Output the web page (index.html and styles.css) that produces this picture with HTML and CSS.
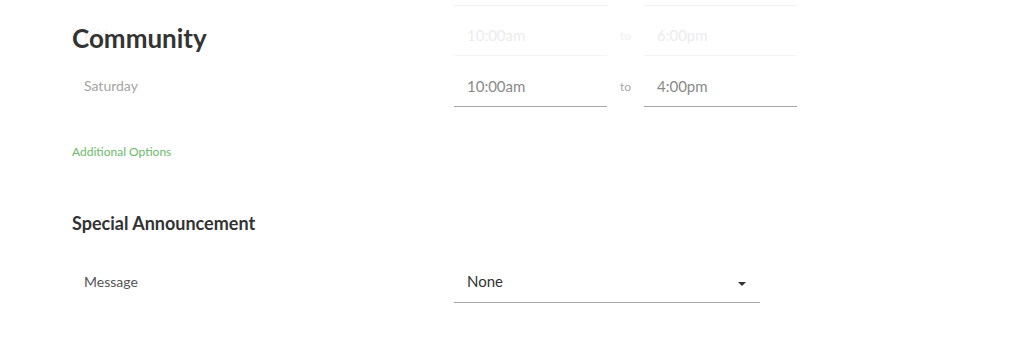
FILE: index.html
```html
<!DOCTYPE html>
<html lang="en">
<head>
<meta charset="utf-8">
<title>Community settings</title>
<link rel="stylesheet" href="styles.css">
</head>
<body>
<div class="page">
  <div class="hours">
    <div class="row faded">
      <span class="label">Friday</span>
      <div class="range">
        <div class="field">10:00am</div>
        <span class="to">to</span>
        <div class="field">6:00pm</div>
      </div>
    </div>
    <div class="row">
      <span class="label">Saturday</span>
      <div class="range">
        <div class="field">10:00am</div>
        <span class="to">to</span>
        <div class="field">4:00pm</div>
      </div>
    </div>
  </div>

  <h1 class="sticky-title">Community</h1>

  <a class="options" href="#">Additional Options</a>

  <h2 class="section-title">Special Announcement</h2>

  <div class="row message-row">
    <span class="label dark">Message</span>
    <div class="select">
      <span class="select-value">None</span>
      <svg class="caret" width="8" height="4" viewBox="0 0 8 4"><path d="M0 0h8L4 4z" fill="#333"/></svg>
    </div>
  </div>
</div>
</body>
</html>
```

FILE: styles.css
```css
* { box-sizing: border-box; }
html, body { margin: 0; padding: 0; background: #fff; }
body {
  font-family: "Lato", "Liberation Sans", sans-serif;
  color: #333;
  width: 1035px;
  height: 359px;
  overflow: hidden;
}
.page {
  position: relative;
  padding: 5px 0 0 72px;
}
.row {
  display: flex;
  align-items: flex-start;
}
.label {
  width: 382px;
  padding: 20px 0 0 12px;
  font-size: 14px;
  line-height: 20px;
  color: #a4a4a4;
}
.label.dark { color: #555; padding-top: 20px; }
.range {
  display: flex;
  align-items: flex-start;
}
.field {
  width: 153px;
  height: 51px;
  padding: 20px 0 0 13px;
  font-size: 15px;
  line-height: 20px;
  color: #8a8a8a;
  border-bottom: 1px solid #a6a6a6;
}
.to {
  width: 37px;
  padding-top: 22px;
  text-align: center;
  font-size: 12px;
  line-height: 18px;
  color: #a8a8a8;
}
.faded .label { color: #f0f0f0; }
.faded .field {
  color: #ececec;
  border-top: 1px solid #f3f3f3;
  border-bottom: 1px solid #f3f3f3;
  padding-top: 19px;
}
.faded .to { color: #efefef; }

.sticky-title {
  position: absolute;
  top: 23px;
  left: 72px;
  margin: 0;
  font-size: 26px;
  line-height: 30px;
  font-weight: 700;
  color: #333;
}
.options {
  display: block;
  margin-top: 37px;
  font-size: 12px;
  line-height: 16px;
  color: #6aba6a;
  text-decoration: none;
}
.section-title {
  margin: 52px 0 0;
  font-size: 18px;
  line-height: 22px;
  font-weight: 700;
  color: #333;
}
.message-row { margin-top: 18px; }
.select {
  width: 306px;
  height: 51px;
  padding: 19px 14px 0 13px;
  display: flex;
  align-items: flex-start;
  justify-content: space-between;
  border-bottom: 1px solid #a6a6a6;
}
.select-value {
  font-size: 15px;
  line-height: 20px;
  color: #333;
}
.caret { margin-top: 11px; }
```
